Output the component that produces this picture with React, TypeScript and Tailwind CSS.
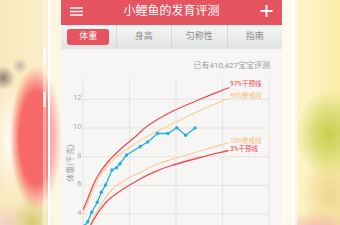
import React from 'react';

type Pt = [number, number];

// catmull-rom -> cubic bezier so the growth curves come out smooth
function smooth(pts: Pt[]) {
  let d = `M${pts[0][0]},${pts[0][1]}`;
  for (let i = 0; i < pts.length - 1; i++) {
    const p0 = pts[i - 1] || pts[i];
    const p1 = pts[i];
    const p2 = pts[i + 1];
    const p3 = pts[i + 2] || p2;
    const c1x = p1[0] + (p2[0] - p0[0]) / 6;
    const c1y = p1[1] + (p2[1] - p0[1]) / 6;
    const c2x = p2[0] - (p3[0] - p1[0]) / 6;
    const c2y = p2[1] - (p3[1] - p1[1]) / 6;
    d += ` C${c1x.toFixed(1)},${c1y.toFixed(1)} ${c2x.toFixed(1)},${c2y.toFixed(1)} ${p2[0]},${p2[1]}`;
  }
  return d;
}

const red97: Pt[] = [
  [83, 209.5], [86.7, 201.5], [91.7, 188.5], [98.3, 175], [108.3, 161.5], [121.7, 148],
  [135, 137], [148, 125.5], [171, 112], [203, 98], [229.5, 87.5],
];
const orange90: Pt[] = [
  [82, 214.3], [86.7, 205], [91.7, 193.3], [98.3, 178.5], [108.3, 165], [121.7, 153],
  [138.3, 141.5], [155, 132.5], [176.7, 121.7], [203, 109], [228.5, 98.5],
];
const orange10: Pt[] = [
  [86, 233], [90, 225], [95, 215], [101.7, 203.3], [111.7, 190], [125, 180], [141.7, 171.7],
  [155, 165], [170, 160], [200, 151], [228.5, 142.7],
];
const red3: Pt[] = [
  [87, 233], [91, 224.5], [98.3, 212.3], [108.3, 200], [121.7, 190], [138.3, 180],
  [155, 171.7], [170, 166], [200, 157.5], [228.5, 150.5],
];
const baby: Pt[] = [
  [84.5, 226], [87.7, 221.7], [91.7, 212.3], [97.3, 202.2], [101.3, 192.3], [105.5, 185],
  [112, 170], [116.5, 167.7], [120, 163.7], [126.5, 155], [140.3, 146.5], [147.7, 142],
  [157.5, 133.5], [168, 133.5], [176.7, 127.7], [185.7, 135.3], [195, 128],
];

const gridX = [83, 129.5, 176, 222.5, 269];
const gridY = [
  { y: 99.3, label: '12' },
  { y: 128, label: '10' },
  { y: 156.7, label: '8' },
  { y: 185.4, label: '6' },
  { y: 214.1, label: '4' },
];

const curveLabels = [
  { y: 84, text: '97%干预线', color: '#ee3f4b' },
  { y: 96, text: '90%警戒线', color: '#f1c07c' },
  { y: 140.7, text: '10%警戒线', color: '#f1c07c' },
  { y: 149, text: '3%干预线', color: '#ee3f4b' },
];

const tabs = ['体重', '身高', '匀称性', '指南'];

const svgFont = "Roboto, 'Noto Sans CJK SC', sans-serif";

function GrowthChart() {
  return (
    <svg className="block h-[150px] w-[221px]" viewBox="61 75 221 150">
      {gridX.map((x) => (
        <line key={x} x1={x} y1={78} x2={x} y2={225} stroke="#e6e3df" strokeWidth={1} />
      ))}
      {gridY.map((g) => (
        <g key={g.label}>
          <line x1={83} y1={g.y} x2={269} y2={g.y} stroke="#e6e3df" strokeWidth={1} />
          <text x={81.5} y={g.y + 0.8} textAnchor="end" fontSize={7.5} fill="#a9a9a9" fontFamily={svgFont}>
            {g.label}
          </text>
        </g>
      ))}
      <text
        x={70}
        y={163}
        transform="rotate(-90 70 163)"
        textAnchor="middle"
        dominantBaseline="central"
        fontSize={8}
        fill="#9c9c9c"
        fontFamily={svgFont}
      >
        体重(千克)
      </text>

      <path d={smooth(red97)} fill="none" stroke="#ef4a55" strokeWidth={1.3} />
      <path d={smooth(orange90)} fill="none" stroke="#f5cf96" strokeWidth={1.2} />
      <path d={smooth(orange10)} fill="none" stroke="#f5cf96" strokeWidth={1.2} />
      <path d={smooth(red3)} fill="none" stroke="#ef4a55" strokeWidth={1.3} />

      <polyline
        points={baby.map((p) => p.join(',')).join(' ')}
        fill="none"
        stroke="#1fb0e0"
        strokeWidth={1.3}
        strokeLinejoin="round"
      />
      {baby.map((p, i) => (
        <circle key={i} cx={p[0]} cy={p[1]} r={1.7} fill="#1fb0e0" />
      ))}

      {curveLabels.map((l) => (
        <text
          key={l.text}
          x={230}
          y={l.y}
          dominantBaseline="central"
          fontSize={6.5}
          fill={l.color}
          fontFamily={svgFont}
        >
          {l.text}
        </text>
      ))}
    </svg>
  );
}

export default function App() {
  return (
    <div className="flex h-[225px] w-[340px] overflow-hidden bg-[radial-gradient(ellipse_26px_72px_at_36px_138px,#f76666_0%,#f76a6a_64%,transparent_100%),radial-gradient(circle_at_3px_78px,#8f8178_0,transparent_12px),radial-gradient(circle_at_20px_66px,#c4b8ad_0,transparent_8px),radial-gradient(ellipse_16px_60px_at_8px_140px,#fffaf4_0,transparent_100%),radial-gradient(ellipse_22px_26px_at_32px_222px,#d6ca72_0,transparent_100%),radial-gradient(ellipse_22px_18px_at_8px_222px,#f3cfc2_0,transparent_100%),radial-gradient(ellipse_34px_44px_at_330px_134px,#c8cf48_0%,#d9dc74_45%,transparent_100%),radial-gradient(ellipse_40px_18px_at_318px_228px,#f2b9aa_0%,transparent_100%),radial-gradient(ellipse_30px_40px_at_330px_195px,#efd692_0%,transparent_100%),linear-gradient(90deg,#f9e9bd,#fbefcf_20%,#fdf8ea_50%,#fdf3c6_90%,#fbeda8)] font-['Roboto','Noto_Sans_CJK_SC',sans-serif]">
      <div className="w-[43px] shrink-0" />

      {/* left bezel */}
      <div className="flex w-[18px] shrink-0">
        <div className="flex w-[3px] flex-col">
          <div className="h-[48px] bg-white/40" />
          <div className="h-[15px] bg-white/90" />
          <div className="h-[29px] bg-white/40" />
          <div className="h-[15px] bg-white/90" />
          <div className="flex-1 bg-white/40" />
        </div>
        <div className="w-[2px] bg-white/15" />
        <div className="w-[2px] bg-white" />
        <div className="w-[11px] bg-white/45" />
      </div>

      {/* phone screen */}
      <div className="flex w-[221px] shrink-0 flex-col">
        <div className="flex h-[25px] items-center bg-[#e6545f] px-[9px] pb-[3px] text-white">
          <svg className="w-[13px]" width="13" height="9" viewBox="0 0 13 9">
            <path d="M0 1h13M0 4.5h13M0 8h13" stroke="#fff" strokeWidth={1.6} />
          </svg>
          <div className="flex-1 text-center text-[12px] leading-[14px]">小鲤鱼的发育评测</div>
          <svg className="w-[13px]" width="13" height="12" viewBox="0 0 13 12">
            <path d="M6.5 0v12M0.5 6h12" stroke="#fff" strokeWidth={1.8} />
          </svg>
        </div>

        <div className="flex h-[24px] bg-gradient-to-b from-[#f5f5f5] to-[#e2e3e4]">
          {tabs.map((t, i) => (
            <div
              key={t}
              className={`flex flex-1 items-center justify-center text-[9px] text-[#8c8c8c] ${
                i > 0 ? 'border-l border-[#d6d6d6]' : ''
              }`}
            >
              {i === 0 ? (
                <div className="flex h-[16px] w-[42px] items-center justify-center rounded-[3px] bg-[#e6545f] text-white">
                  {t}
                </div>
              ) : (
                t
              )}
            </div>
          ))}
        </div>

        <div className="flex flex-1 flex-col bg-[#f7f6f4]">
          <div className="h-[26px] pt-[12px] pr-[12px] text-right text-[8px] leading-[10px] text-[#9a9a9a]">
            已有410,427宝宝评测
          </div>
          <GrowthChart />
        </div>
      </div>

      {/* right bezel */}
      <div className="flex w-[15px] shrink-0">
        <div className="w-[10px] bg-white/65" />
        <div className="w-[2px] bg-white" />
        <div className="w-[3px] bg-white/55" />
      </div>

      <div className="flex-1" />
    </div>
  );
}
